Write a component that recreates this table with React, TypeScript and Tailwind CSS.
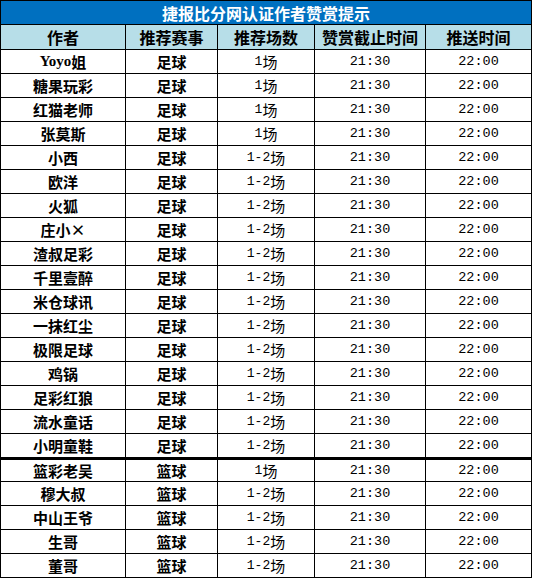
import React from 'react';

type Row = { author: string; sport: string; count: string };

const rows: Row[] = [
  { author: 'Yoyo姐', sport: '足球', count: '1场' },
  { author: '糖果玩彩', sport: '足球', count: '1场' },
  { author: '红猫老师', sport: '足球', count: '1场' },
  { author: '张莫斯', sport: '足球', count: '1场' },
  { author: '小西', sport: '足球', count: '1-2场' },
  { author: '欧洋', sport: '足球', count: '1-2场' },
  { author: '火狐', sport: '足球', count: '1-2场' },
  { author: '庄小×', sport: '足球', count: '1-2场' },
  { author: '渣叔足彩', sport: '足球', count: '1-2场' },
  { author: '千里壹醉', sport: '足球', count: '1-2场' },
  { author: '米仓球讯', sport: '足球', count: '1-2场' },
  { author: '一抹红尘', sport: '足球', count: '1-2场' },
  { author: '极限足球', sport: '足球', count: '1-2场' },
  { author: '鸡锅', sport: '足球', count: '1-2场' },
  { author: '足彩红狼', sport: '足球', count: '1-2场' },
  { author: '流水童话', sport: '足球', count: '1-2场' },
  { author: '小明童鞋', sport: '足球', count: '1-2场' },
  { author: '篮彩老吴', sport: '篮球', count: '1场' },
  { author: '穆大叔', sport: '篮球', count: '1-2场' },
  { author: '中山王爷', sport: '篮球', count: '1-2场' },
  { author: '生哥', sport: '篮球', count: '1-2场' },
  { author: '董哥', sport: '篮球', count: '1-2场' },
];

const headers = ['作者', '推荐赛事', '推荐场数', '赞赏截止时间', '推送时间'];

const cell = 'flex items-center justify-center border-r border-b border-black';
const grid = 'grid grid-cols-[125px_92px_97px_111px_106px]';

// latin letters in the author names use a slab-ish serif, like the original
function Author({ name }: { name: string }) {
  const parts = name.split(/([A-Za-z]+)/).filter(Boolean);
  return (
    <>
      {parts.map((p, i) =>
        /^[A-Za-z]+$/.test(p) ? (
          <span key={i} className="font-['Liberation_Serif',serif] text-[15px]">{p}</span>
        ) : (
          <span key={i}>{p}</span>
        ),
      )}
    </>
  );
}

export default function App() {
  return (
    <div className="w-[533px] h-[579px] bg-white font-['Noto_Sans_CJK_SC',sans-serif] text-black">
      <div className="w-[532px] border-l border-t border-black">
        <div className="h-[24px] flex items-center justify-center border-r border-b border-black bg-[#0070c0] text-white text-[16px] font-bold leading-none">
          捷报比分网认证作者赞赏提示
        </div>
        <div className={`${grid} h-[25px] bg-[#b7dee8]`}>
          {headers.map((h) => (
            <div key={h} className={`${cell} text-[16px] font-bold leading-none`}>
              {h}
            </div>
          ))}
        </div>
        {rows.map((r, i) => {
          const sep = i === 16;
          const rowCls = sep ? 'h-[26px] border-b-[3px]' : i === 17 ? 'h-[22px]' : 'h-[24px]';
          return (
            <div key={r.author} className={grid}>
              <div className={`${cell} ${rowCls} text-[15px] font-bold leading-none`}>
                <Author name={r.author} />
              </div>
              <div className={`${cell} ${rowCls} text-[15px] font-bold leading-none`}>{r.sport}</div>
              <div className={`${cell} ${rowCls} text-[14px] leading-none`}>
                <span className="font-['Liberation_Mono','Noto_Sans_CJK_SC',monospace] text-[13px]">
                  {r.count.replace('场', '')}
                </span>
                <span className="text-[15px]">场</span>
              </div>
              <div className={`${cell} ${rowCls} font-['Liberation_Mono',monospace] text-[13.5px] leading-none`}>21:30</div>
              <div className={`${cell} ${rowCls} font-['Liberation_Mono',monospace] text-[13.5px] leading-none`}>22:00</div>
            </div>
          );
        })}
      </div>
    </div>
  );
}
